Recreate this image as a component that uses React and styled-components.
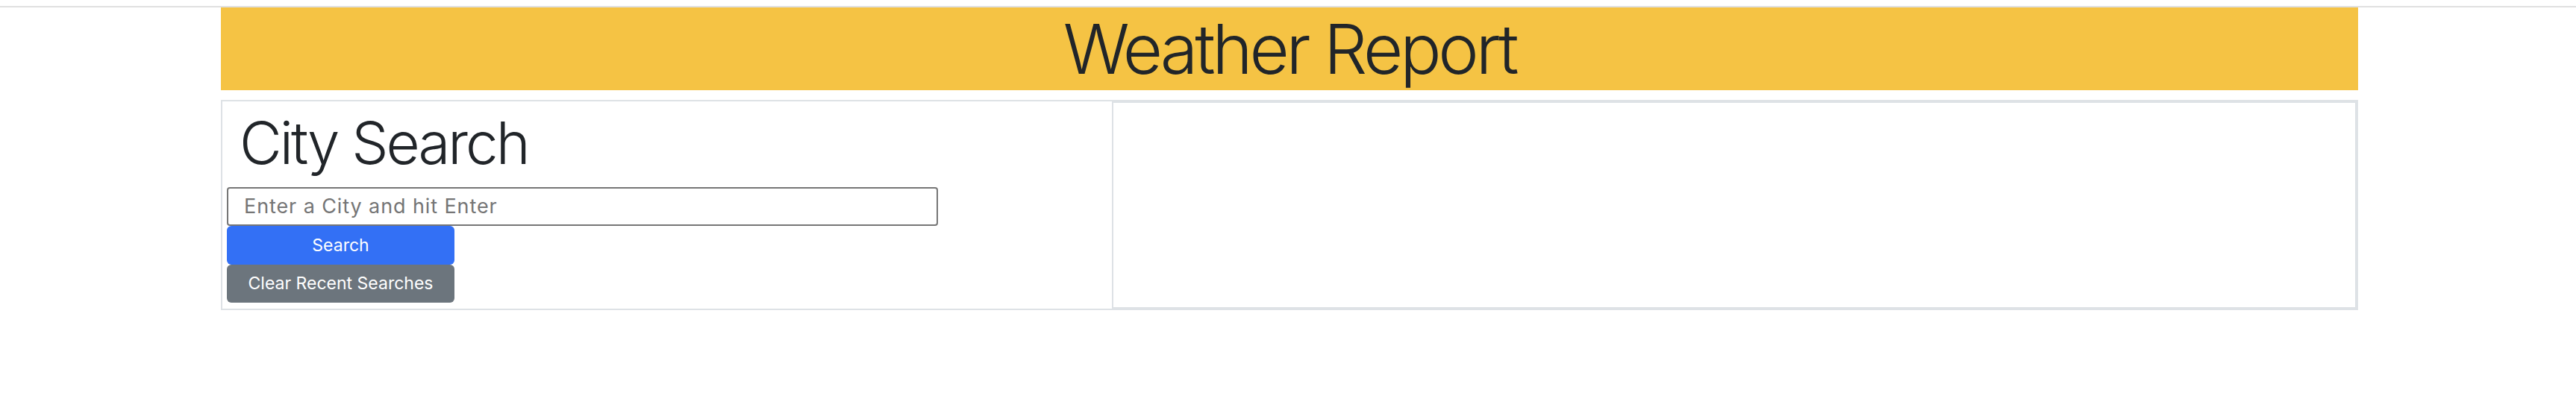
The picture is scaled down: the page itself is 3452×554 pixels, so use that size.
import styled, { createGlobalStyle } from 'styled-components'

const GlobalStyle = createGlobalStyle`
	body {
		margin: 0;
		background: #fff;
		font-family: Inter, "Noto Sans", "Liberation Sans", sans-serif;
		color: #212529;
	}
`

const TopRule = styled.div`
	margin-top: 8px;
	height: 2px;
	background: #e0e0e0;
`

const Container = styled.div`
	width: 2864px;
	margin-left: 296px;
`

const Header = styled.header`
	height: 111px;
	background: #f5c344;
	text-align: center;

	& h1 {
		margin: 0;
		font-size: 92px;
		font-weight: 300;
		line-height: 111px;
		letter-spacing: -4.2px;
		color: #212529;
	}
`

const Row = styled.main`
	display: flex;
	margin-top: 13px;
`

const SearchCard = styled.section`
	box-sizing: border-box;
	width: 1196px;
	padding: 9px 6px 8px;
	border: 2px solid #dee2e6;
`

const Heading = styled.h2`
	margin: 0 0 12px 17px;
	font-size: 78px;
	font-weight: 300;
	line-height: 1.2;
	letter-spacing: -3px;
	color: #212529;
`

const CityInput = styled.input`
	display: block;
	box-sizing: border-box;
	width: 953px;
	height: 52px;
	margin: 0;
	padding: 0 0 0 21px;
	border: 2px solid #767676;
	border-radius: 4px;
	font-family: inherit;
	font-size: 27px;
	letter-spacing: 0.9px;
	color: #212529;

	&::placeholder {
		color: #757575;
	}
`

const Button = styled.button`
	display: block;
	box-sizing: border-box;
	width: 305px;
	height: ${({ $height }) => $height || '52px'};
	margin: 0;
	padding: 0;
	border: none;
	border-radius: 6px;
	font-family: inherit;
	font-size: 23px;
	color: #fff;
	background: ${({ $variant }) => ($variant === 'secondary' ? '#6c757d' : '#3370f5')};
	cursor: pointer;
`

const ResultsCard = styled.section`
	flex: 1;
	box-sizing: border-box;
	border: 4px solid #dee2e6;
	border-left: none;
`

export default function App() {
	return (
		<>
			<GlobalStyle />
			<TopRule />
			<Container>
				<Header>
					<h1>Weather Report</h1>
				</Header>
				<Row>
					<SearchCard>
						<Heading>City Search</Heading>
						<CityInput type="text" placeholder="Enter a City and hit Enter" />
						<Button>Search</Button>
						<Button $variant="secondary" $height="51px">
							Clear Recent Searches
						</Button>
					</SearchCard>
					<ResultsCard />
				</Row>
			</Container>
		</>
	)
}
